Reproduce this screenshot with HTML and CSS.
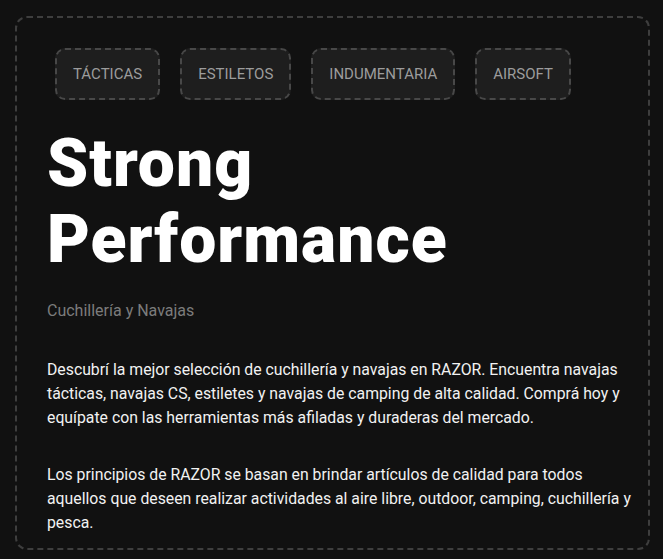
FILE: index.html
```html
<!DOCTYPE html>
<html lang="es">
<head>
<meta charset="utf-8">
<title>Strong Performance</title>
<link rel="stylesheet" href="styles.css">
</head>
<body>
<section class="panel">
  <nav class="chips">
    <a class="chip">TÁCTICAS</a>
    <a class="chip">ESTILETOS</a>
    <a class="chip">INDUMENTARIA</a>
    <a class="chip">AIRSOFT</a>
  </nav>
  <h1 class="title">Strong Performance</h1>
  <p class="subtitle">Cuchillería y Navajas</p>
  <p class="text">Descubrí la mejor selección de cuchillería y navajas en RAZOR. Encuentra navajas tácticas, navajas CS, estiletes y navajas de camping de alta calidad. Comprá hoy y equípate con las herramientas más afiladas y duraderas del mercado.</p>
  <p class="text">Los principios de RAZOR se basan en brindar artículos de calidad para todos aquellos que deseen realizar actividades al aire libre, outdoor, camping, cuchillería y pesca.</p>
</section>
</body>
</html>
```

FILE: styles.css
```css
html, body {
  margin: 0;
  background: #111111;
}
body {
  padding: 16px 13px 10px 15px;
  font-family: Roboto, "Liberation Sans", sans-serif;
}
.panel {
  border: 2px dashed #3e3e3e;
  border-radius: 12px;
  padding: 30px 10px 13px 30px;
}
.chips {
  display: flex;
  gap: 20px;
  padding-left: 8px;
}
.chip {
  display: block;
  background: #1e1e1e;
  border: 2px dashed #484848;
  border-radius: 10px;
  padding: 15px 16px;
  font-size: 15px;
  line-height: 18px;
  font-weight: 400;
  color: #9c9c9c;
}
.title {
  margin: 26px 0 0 0;
  font-size: 66px;
  line-height: 76px;
  font-weight: 900;
  color: #ffffff;
  letter-spacing: 1px;
}
.subtitle {
  margin: 21px 0 0 0;
  font-size: 16px;
  line-height: 24px;
  color: #7c7c7c;
}
.text {
  margin: 35px 0 0 0;
  font-size: 15.8px;
  line-height: 24px;
  color: #f2f2f2;
}
.text + .text {
  margin-top: 33px;
}
```
